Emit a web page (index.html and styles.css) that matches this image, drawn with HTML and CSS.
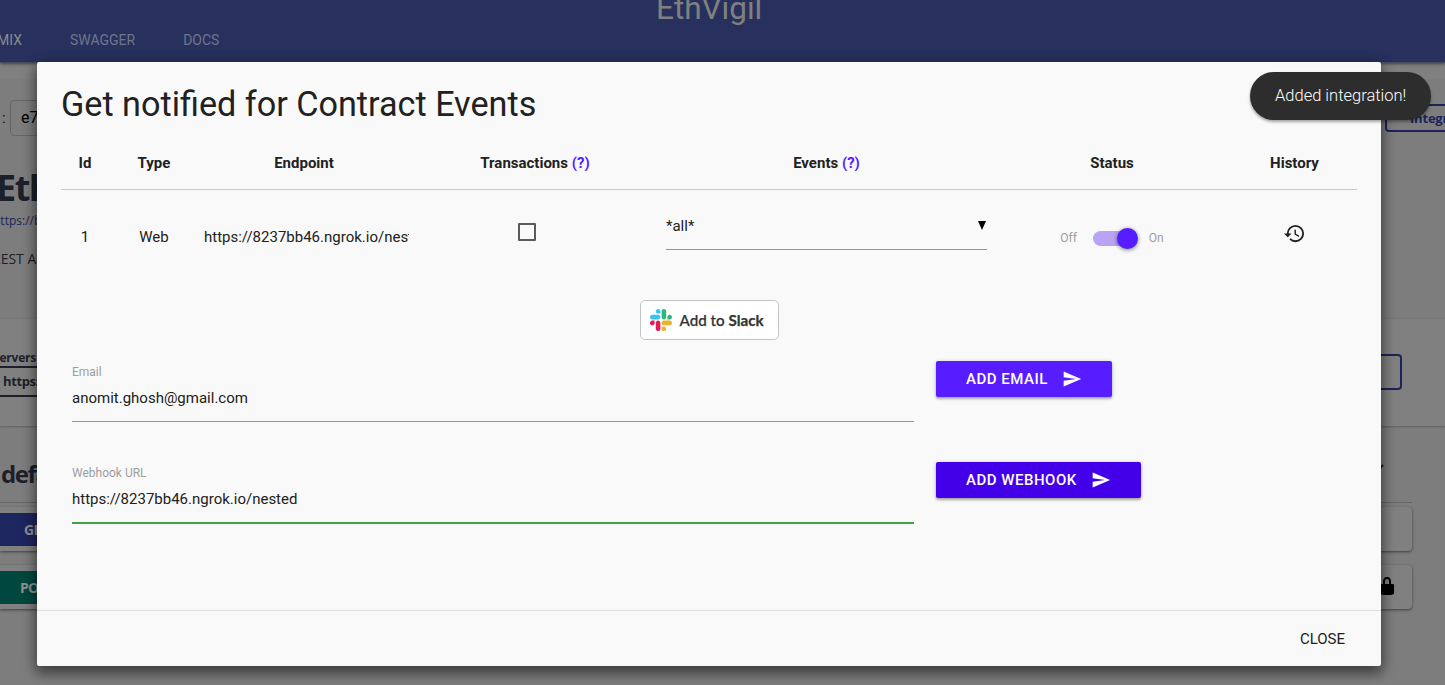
FILE: index.html
```html
<!DOCTYPE html>
<html lang="en">
<head>
<meta charset="utf-8">
<title>EthVigil</title>
<link rel="stylesheet" href="styles.css">
</head>
<body>
<div class="page">
  <header class="nav">
    <div class="brand">EthVigil</div>
    <nav class="tabs">
      <span class="tab active">REMIX</span>
      <span class="tab">SWAGGER</span>
      <span class="tab">DOCS</span>
    </nav>
  </header>
  <div class="strip"></div>
  <main class="docs">
    <section class="info">
      <div class="keyrow">
        <span class="keylabel">:</span>
        <span class="keybox">e7</span>
        <span class="integr">Integr</span>
      </div>
      <h1 class="apititle">Eth</h1>
      <div class="apilink">https://b</div>
      <div class="apidesc">REST A</div>
    </section>
    <section class="servers">
      <div class="server">
        <div class="serverlabel">Servers</div>
        <div class="serverselect">https:</div>
      </div>
      <div class="authorize"></div>
    </section>
    <section class="ops">
      <div class="tag"><span>defa</span>
        <svg class="chev" viewBox="0 0 20 20"><path d="M2 6l8 8 8-8" fill="none" stroke="#111" stroke-width="2"/></svg>
      </div>
      <div class="op"><span class="method get">GET</span></div>
      <div class="op"><span class="method post">POST</span>
        <svg class="lock" viewBox="0 0 20 20"><path d="M15.8 8H14V5.6C14 2.703 12.665 1 10 1 7.334 1 6 2.703 6 5.6V8H4c-.553 0-1 .646-1 1.199V17c0 .549.428 1.139.951 1.307l1.197.387C5.672 18.861 6.55 19 7.1 19h5.8c.549 0 1.428-.139 1.951-.307l1.196-.387c.524-.167.953-.757.953-1.306V9.199C17 8.646 16.352 8 15.8 8zM12 8H8V5.199C8 3.754 8.797 3 10 3c1.203 0 2 .754 2 2.199V8z"/></svg>
      </div>
    </section>
  </main>
</div>

<div class="modal">
  <div class="content">
    <h4 class="title">Get notified for Contract Events</h4>
    <div class="row head">
      <div>Id</div><div>Type</div><div>Endpoint</div>
      <div>Transactions <a>(?)</a></div><div>Events <a>(?)</a></div>
      <div>Status</div><div>History</div>
    </div>
    <div class="row data">
      <div>1</div>
      <div>Web</div>
      <div class="endpoint">https://8237bb46.ngrok.io/nested</div>
      <div class="checkcell"><span class="check"></span></div>
      <div class="selectcell"><div class="select"><span>*all*</span><svg width="8" height="10" viewBox="0 0 8 10"><path d="M0 0h8L4 9z"/></svg></div></div>
      <div class="switch"><span>Off</span><span class="lever"><i class="thumb"></i></span><span>On</span></div>
      <div class="historycell"><svg width="23" height="23" viewBox="0 0 24 24"><path fill="#212121" d="M13 3a9 9 0 0 0-9 9H1l3.89 3.89.07.14L9 12H6c0-3.87 3.13-7 7-7s7 3.13 7 7-3.13 7-7 7c-1.93 0-3.68-.79-4.94-2.06l-1.42 1.42A8.954 8.954 0 0 0 13 21a9 9 0 0 0 0-18zm-1 5v5l4.28 2.54.72-1.21-3.5-2.08V8H12z"/></svg></div>
    </div>
    <div class="slackrow">
      <div class="slack">
        <svg width="22" height="22" viewBox="0 0 122.8 122.8"><path fill="#e01e5a" d="M25.8 77.6c0 7.1-5.8 12.9-12.9 12.9S0 84.7 0 77.6s5.8-12.9 12.9-12.9h12.9v12.9zm6.5 0c0-7.1 5.8-12.9 12.9-12.9s12.9 5.8 12.9 12.9v32.3c0 7.1-5.8 12.9-12.9 12.9s-12.9-5.8-12.9-12.9V77.6z"/><path fill="#36c5f0" d="M45.2 25.8c-7.1 0-12.9-5.8-12.9-12.9S38.1 0 45.2 0s12.9 5.8 12.9 12.9v12.9H45.2zm0 6.5c7.1 0 12.9 5.8 12.9 12.9s-5.8 12.9-12.9 12.9H12.9C5.8 58.1 0 52.3 0 45.2s5.8-12.9 12.9-12.9h32.3z"/><path fill="#2eb67d" d="M97 45.2c0-7.1 5.8-12.9 12.9-12.9s12.9 5.8 12.9 12.9-5.8 12.9-12.9 12.9H97V45.2zm-6.5 0c0 7.1-5.8 12.9-12.9 12.9s-12.9-5.8-12.9-12.9V12.9C64.7 5.8 70.5 0 77.6 0s12.9 5.8 12.9 12.9v32.3z"/><path fill="#ecb22e" d="M77.6 97c7.1 0 12.9 5.8 12.9 12.9s-5.8 12.9-12.9 12.9-12.9-5.8-12.9-12.9V97h12.9zm0-6.5c-7.1 0-12.9-5.8-12.9-12.9s5.8-12.9 12.9-12.9h32.3c7.1 0 12.9 5.8 12.9 12.9s-5.8 12.9-12.9 12.9H77.6z"/></svg>
        <span>Add to <b>Slack</b></span>
      </div>
    </div>
    <div class="formrow">
      <div class="field"><label>Email</label><div class="value">anomit.ghosh@gmail.com</div></div>
      <div class="btn">ADD EMAIL<svg class="send" viewBox="0 0 24 24"><path d="M2.01 21L23 12 2.01 3 2 10l15 2-15 2z"/></svg></div>
    </div>
    <div class="formrow">
      <div class="field valid"><label>Webhook URL</label><div class="value">https://8237bb46.ngrok.io/nested</div></div>
      <div class="btn focus">ADD WEBHOOK<svg class="send" viewBox="0 0 24 24"><path d="M2.01 21L23 12 2.01 3 2 10l15 2-15 2z"/></svg></div>
    </div>
  </div>
  <div class="footer"><span>CLOSE</span></div>
</div>
<div class="toast">Added integration!</div>
</body>
</html>
```
FILE: styles.css
```css
* { box-sizing: border-box; }
body {
  margin: 0;
  width: 1445px;
  height: 685px;
  overflow: hidden;
  position: relative;
  background: #7d7d7d;
  font: 15px/22px Roboto, sans-serif;
  color: #212121;
}
.page { height: 685px; overflow: hidden; }

/* dimmed page behind the dialog */
.nav {
  height: 63px;
  background: #28315e;
  position: relative;
  box-shadow: 0 1px 3px rgba(0,0,0,.5);
  border-bottom: 1px solid #484b5c;
}
.brand { height: 24px; line-height: 17px; margin-left: 656px; font-size: 31.5px; color: #808080; }
.tabs { display: flex; gap: 48px; margin-left: -19.5px; padding-top: 5px; font-size: 14px; }
.tab { color: #70758c; }
.tab.active { color: #8c8c8c; }
.strip { height: 16px; background: #808080; }
.info { height: 239px; padding-top: 21px; }
.keyrow { display: flex; }
.keylabel { flex: none; width: 10px; padding: 7px 0 0 2px; color: #111; }
.keybox { flex: none; width: 300px; height: 36px; border: 1px solid #666; border-radius: 4px; padding: 6px 10px; color: #000; font-size: 16px; }
.integr {
  margin: 4px 0 0 1075px;
  flex: none;
  width: 130px;
  height: 28px;
  border: 2px solid #1c2459;
  border-radius: 4px;
  padding-left: 23px;
  font: bold 13px/25px "Open Sans", sans-serif;
  letter-spacing: -.2px;
  color: #1c2459;
}
.apititle { margin: 26px 0 0 -4px; font: bold 36px/52px "Open Sans", sans-serif; letter-spacing: -1.5px; color: #1d202a; }
.apilink { margin: -1px 0 0 -7px; font: 12px/16px "Open Sans", sans-serif; color: #1c2459; }
.apidesc { margin: 19px 0 0 -8px; font: 14px/22px "Open Sans", sans-serif; color: #1d202a; }
.servers {
  height: 108px;
  display: flex;
  justify-content: space-between;
  background: #808080;
  padding: 31px 43px 0 0;
  border-top: 1px solid #777;
  box-shadow: 0 1px 2px rgba(0,0,0,.25);
}
.server { width: 320px; }
.serverlabel { margin-left: -7px; font: bold 12px/16px "Open Sans", sans-serif; letter-spacing: -.2px; color: #1d202a; }
.serverselect {
  margin: 0 0 0 -5px;
  height: 31px;
  border: 2px solid #1d202a;
  padding-left: 6px;
  font: bold 13px/27px "Open Sans", sans-serif;
  letter-spacing: -.4px;
  color: #1d202a;
}
.authorize { width: 130px; height: 36px; margin-top: 4px; border: 2px solid #1c2459; border-radius: 4px; }
.ops { padding-right: 33px; }
.tag {
  display: flex;
  justify-content: space-between;
  height: 77px;
  padding: 33px 27px 0 1px;
  margin-bottom: 4px;
  border-bottom: 1px solid #666;
  font: bold 24px/30px "Open Sans", sans-serif;
  letter-spacing: -1.4px;
  color: #1d202a;
}
.chev { width: 20px; height: 20px; margin: 0; }
.op {
  display: flex;
  justify-content: space-between;
  align-items: center;
  height: 44px;
  margin-bottom: 14px;
  padding: 0 15px 0 0;
  background: #808080;
  border-radius: 0 4px 4px 0;
  box-shadow: 0 1px 3px rgba(0,0,0,.5);
}
.method { width: 72px; height: 33px; padding-left: 24px; font: bold 14px/33px "Open Sans", sans-serif; letter-spacing: -.7px; color: #909090; }
.get { background: #1e265f; }
.post { background: #00483f; padding-left: 20px; }
.lock { width: 20px; height: 20px; margin-bottom: 2px; }

/* dialog */
.modal {
  position: absolute;
  left: 37px;
  top: 62px;
  width: 1344px;
  height: 604px;
  display: flex;
  flex-direction: column;
  background: #f9f9f9;
  border-radius: 2px;
  box-shadow: 0 8px 10px 1px rgba(0,0,0,.14), 0 3px 14px 2px rgba(0,0,0,.12), 0 5px 15px rgba(0,0,0,.4);
}
.content { flex: 1; padding: 23px 24px 0; }
.title { margin: 0; font: 400 34.2px/38px Roboto, sans-serif; height: 51px; }
.row {
  display: grid;
  grid-template-columns: 48px 90px 210px 252px 331px 240px 125px;
  text-align: center;
}
.head { height: 54px; padding-top: 16px; border-bottom: 1px solid #c9c9c9; font-weight: 700; }
.head a { color: #571cff; }
.data { height: 110px; line-height: 94px; }
.endpoint { padding-left: 5px; overflow: hidden; white-space: nowrap; text-align: left; }
.checkcell { padding: 33px 0 0 109px; }
.check { display: block; width: 18px; height: 18px; border: 2px solid #5a5a5a; border-radius: 1px; }
.selectcell { padding: 15px 5px 0; }
.select {
  display: flex;
  justify-content: space-between;
  align-items: center;
  height: 45px;
  padding: 0 1px 2px 0;
  border-bottom: 1px solid #949494;
  line-height: 22px;
}
.switch { display: flex; justify-content: center; align-items: center; height: 96px; font-size: 12px; color: #9e9e9e; }
.lever { width: 36px; height: 15px; margin: 0 20px 0 16px; border-radius: 8px; background: #b9a3f3; }
.thumb {
  display: block;
  width: 21px;
  height: 21px;
  margin: -3px 0 0 24px;
  border-radius: 50%;
  background: #571cff;
  box-shadow: 0 1px 4px rgba(0,0,0,.5);
}
.historycell svg { display: block; margin: 32px 0 0 51px; }
.slackrow { display: flex; justify-content: center; height: 61px; }
.slack {
  display: flex;
  align-items: center;
  gap: 8px;
  width: 139px;
  height: 40px;
  padding-left: 9px;
  border: 1px solid #c4c4c4;
  border-radius: 5px;
  background: #fff;
  font: 15.2px/22px Lato, sans-serif;
  font-weight: 500;
  color: #333;
  -webkit-text-stroke: .25px #333;
  white-space: nowrap;
}
.slack b { font-weight: 700; }
.formrow { display: flex; height: 101px; padding-left: 11px; }
.field { width: 842px; height: 61px; margin-right: 22px; border-bottom: 1px solid #949494; }
.field.valid { height: 62px; border-bottom: 2px solid #43a047; }
.field label { display: block; padding-top: 2px; height: 20px; font-size: 12px; line-height: 18px; color: #9e9e9e; }
.value { margin-top: 6px; }
.btn {
  display: flex;
  align-items: center;
  justify-content: space-between;
  width: 176px;
  height: 36px;
  padding: 0 30px;
  border-radius: 2px;
  background: #571cff;
  box-shadow: 0 2px 2px rgba(0,0,0,.2), 0 1px 4px rgba(0,0,0,.25);
  color: #fff;
  font-weight: 500;
  letter-spacing: .5px;
  white-space: nowrap;
}
.btn.focus { width: 205px; background: #4300e8; }
.send { width: 20px; height: 20px; fill: #fff; }
.footer { height: 56px; border-top: 1px solid #dedede; display: flex; justify-content: flex-end; padding: 17px 36px 0 0; }

.toast {
  position: absolute;
  left: 1250px;
  top: 72px;
  width: 181px;
  height: 48px;
  padding-left: 25px;
  border-radius: 24px;
  background: #2d2d2d;
  color: #fff;
  font-size: 16.5px;
  font-weight: 300;
  line-height: 47px;
  box-shadow: 0 2px 3px rgba(0,0,0,.35);
  white-space: nowrap;
}
```
